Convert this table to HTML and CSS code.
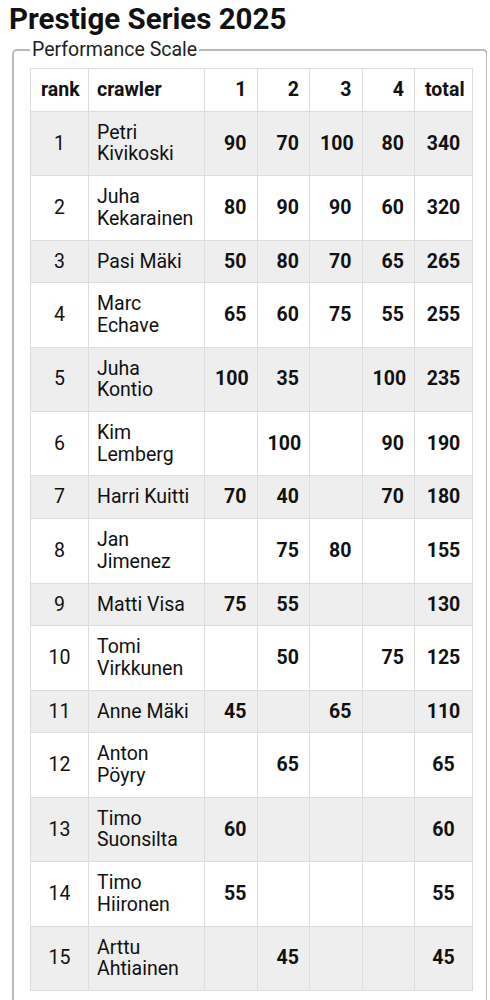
FILE: index.html
```html
<!DOCTYPE html>
<html lang="en">
<head>
    <meta charset="UTF-8">
    <meta name="viewport" content="width=device-width, initial-scale=1.0">
    <title>Prestige Series 2025</title>
    <link rel="stylesheet" href="styles.css">
</head>
<body>

    <h1 class="title">Prestige Series 2025</h1>

    <!-- Tabla de resultados -->
    <fieldset class="scale">
        <legend>Performance Scale</legend>
        <table class="results">
            <colgroup>
                <col class="c-rank">
                <col class="c-name">
                <col class="c-pt">
                <col class="c-pt">
                <col class="c-pt">
                <col class="c-pt">
                <col class="c-total">
            </colgroup>
            <thead>
                <tr>
                    <th class="rank">rank</th>
                    <th class="name">crawler</th>
                    <th class="pt">1</th>
                    <th class="pt">2</th>
                    <th class="pt">3</th>
                    <th class="pt">4</th>
                    <th class="total">total</th>
                </tr>
            </thead>
            <tbody>
                <tr><td class="rank">1</td><td class="name">Petri Kivikoski</td><td class="pt">90</td><td class="pt">70</td><td class="pt">100</td><td class="pt">80</td><td class="total">340</td></tr>
                <tr><td class="rank">2</td><td class="name">Juha Kekarainen</td><td class="pt">80</td><td class="pt">90</td><td class="pt">90</td><td class="pt">60</td><td class="total">320</td></tr>
                <tr><td class="rank">3</td><td class="name">Pasi Mäki</td><td class="pt">50</td><td class="pt">80</td><td class="pt">70</td><td class="pt">65</td><td class="total">265</td></tr>
                <tr><td class="rank">4</td><td class="name">Marc Echave</td><td class="pt">65</td><td class="pt">60</td><td class="pt">75</td><td class="pt">55</td><td class="total">255</td></tr>
                <tr><td class="rank">5</td><td class="name">Juha Kontio</td><td class="pt">100</td><td class="pt">35</td><td class="pt"></td><td class="pt">100</td><td class="total">235</td></tr>
                <tr><td class="rank">6</td><td class="name">Kim Lemberg</td><td class="pt"></td><td class="pt">100</td><td class="pt"></td><td class="pt">90</td><td class="total">190</td></tr>
                <tr><td class="rank">7</td><td class="name">Harri Kuitti</td><td class="pt">70</td><td class="pt">40</td><td class="pt"></td><td class="pt">70</td><td class="total">180</td></tr>
                <tr><td class="rank">8</td><td class="name">Jan Jimenez</td><td class="pt"></td><td class="pt">75</td><td class="pt">80</td><td class="pt"></td><td class="total">155</td></tr>
                <tr><td class="rank">9</td><td class="name">Matti Visa</td><td class="pt">75</td><td class="pt">55</td><td class="pt"></td><td class="pt"></td><td class="total">130</td></tr>
                <tr><td class="rank">10</td><td class="name">Tomi Virkkunen</td><td class="pt"></td><td class="pt">50</td><td class="pt"></td><td class="pt">75</td><td class="total">125</td></tr>
                <tr><td class="rank">11</td><td class="name">Anne Mäki</td><td class="pt">45</td><td class="pt"></td><td class="pt">65</td><td class="pt"></td><td class="total">110</td></tr>
                <tr><td class="rank">12</td><td class="name">Anton Pöyry</td><td class="pt"></td><td class="pt">65</td><td class="pt"></td><td class="pt"></td><td class="total">65</td></tr>
                <tr><td class="rank">13</td><td class="name">Timo Suonsilta</td><td class="pt">60</td><td class="pt"></td><td class="pt"></td><td class="pt"></td><td class="total">60</td></tr>
                <tr><td class="rank">14</td><td class="name">Timo Hiironen</td><td class="pt">55</td><td class="pt"></td><td class="pt"></td><td class="pt"></td><td class="total">55</td></tr>
                <tr><td class="rank">15</td><td class="name">Arttu Ahtiainen</td><td class="pt"></td><td class="pt">45</td><td class="pt"></td><td class="pt"></td><td class="total">45</td></tr>
            </tbody>
        </table>
    </fieldset>

</body>
</html>
```

FILE: styles.css
```css
/* Estilos globales */
* {
    box-sizing: border-box;
}

body {
    margin: 0 3px 0 8px;
    font-family: Roboto, 'Liberation Sans', sans-serif;
    font-size: 19.5px;
    color: #111;
    background: #fff;
}

/* Titulo */
.title {
    margin: 4px 0 0 1px;
    font-size: 29.5px;
    line-height: 30px;
    font-weight: bold;
}

/* Marco */
.scale {
    margin: 5px 0 0 4px;
    padding: 8px 13px 16px 16px;
    border: 2px solid #bbb;
    border-radius: 5px;
}

.scale legend {
    padding: 0 2px;
    font-size: 19.5px;
    line-height: 21px;
    color: #222;
}

/* Tabla */
.results {
    width: 443px;
    table-layout: fixed;
    border-collapse: collapse;
}

.c-rank { width: 58px; }
.c-name { width: 116px; }
.c-pt { width: 52.5px; }
.c-total { width: 58px; }

.results th,
.results td {
    padding: 10px;
    border: 1px solid #ddd;
    line-height: 21.7px;
    vertical-align: middle;
}

.results th {
    font-weight: bold;
}

.results tbody tr:nth-child(odd) {
    background-color: #eee;
}

.rank {
    text-align: center;
}

.results .name {
    padding-left: 8px;
    padding-right: 4px;
    text-align: left;
}

.results td.pt,
.results td.total {
    font-weight: bold;
}

.pt {
    text-align: right;
}

.total {
    text-align: center;
}
```
